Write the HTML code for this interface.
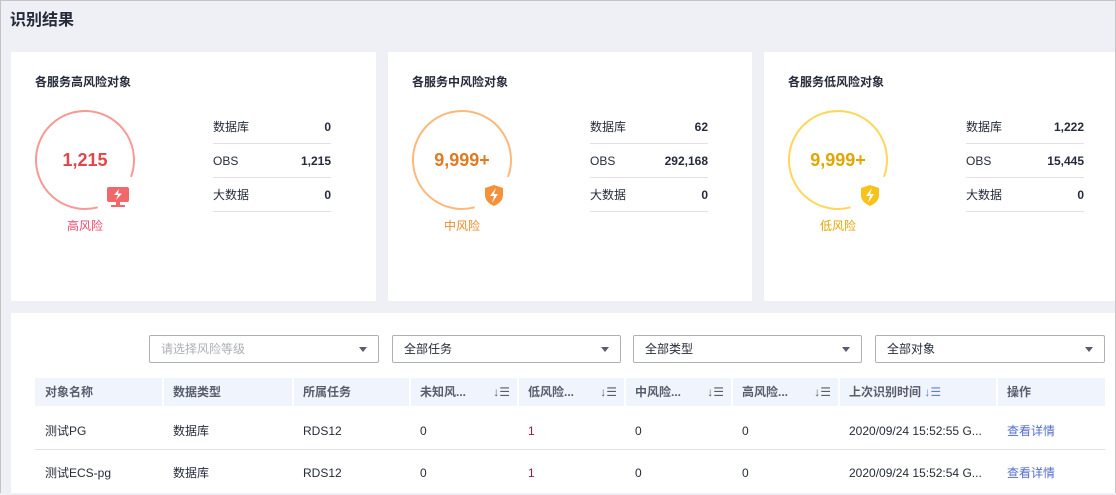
<!DOCTYPE html><html><head><meta charset="utf-8"><style>
*{box-sizing:border-box;margin:0;padding:0}
body{width:1116px;height:493px;overflow:hidden;background:#eef0f5;font-family:"Liberation Sans","Noto Sans CJK SC",sans-serif;font-size:12px;color:#252b3a;position:relative}
.bd{position:absolute;left:0;top:0;width:1116px;height:493px;border:1px solid #c4c4c4;border-bottom:none;pointer-events:none}
.a{position:absolute}
.card{position:absolute;top:52px;height:249px;background:#fff}
.ct{position:absolute;left:24px;top:21px;font-size:12px;font-weight:bold;color:#252b3a}
.st{position:absolute;left:202px;width:118px}
.st div{height:34px;border-bottom:1px solid #dfe1e6;display:flex;justify-content:space-between;align-items:center}
.st b{font-weight:bold}
.num{position:absolute;left:24px;top:96px;width:100px;line-height:24px;text-align:center;font-size:18px;font-weight:bold}
.lbl{position:absolute;left:24px;top:165px;width:100px;text-align:center;font-size:12px}
.dd{position:absolute;top:335px;height:28px;border:1px solid #adb0b8;border-radius:2px;background:#fff;padding-left:11px;line-height:26px;font-size:12px}
.dd:after{content:"";position:absolute;right:11px;top:11px;border:4px solid transparent;border-top:5px solid #575d6c}
.th{position:absolute;top:378px;height:28px;background:#f0f4fc;line-height:28px;font-weight:bold;color:#575d6c;padding-left:10px}
.td{position:absolute;height:44px;line-height:44px;padding-left:10px;color:#252b3a}
.sep{position:absolute;width:2px;background:#fff;top:378px;height:28px}
.srt{position:absolute;right:8px;top:0;font-weight:normal;color:#575d6c}
</style></head><body>
<div class="a" style="left:10px;top:6px;font-size:16px;font-weight:bold">识别结果</div>

<div class="card" style="left:11px;width:365px">
<div class="ct">各服务高风险对象</div>
<svg class="a" style="left:22px;top:56px" width="110" height="110"><path d="M64.7 99.3 A49 49 0 1 1 98 68.8" fill="none" stroke="#f59a95" stroke-width="2"/>
<rect x="74" y="79" width="22" height="15" rx="2" fill="#f0686a"/><rect x="83" y="94" width="4" height="3" fill="#f0686a"/><rect x="78" y="97" width="14" height="2" fill="#f0686a"/><path d="M86 81 L81 87 L85 87 L83 92 L89 85.5 L85 85.5 Z" fill="#fff"/></svg>
<div class="num" style="color:#e0464a">1,215</div>
<div class="lbl" style="color:#e84a6e">高风险</div>
<div class="st" style="top:58px"><div><span>数据库</span><b>0</b></div><div><span>OBS</span><b>1,215</b></div><div><span>大数据</span><b>0</b></div></div>
</div>

<div class="card" style="left:388px;width:364px">
<div class="ct">各服务中风险对象</div>
<svg class="a" style="left:22px;top:56px" width="110" height="110"><path d="M64.7 99.3 A49 49 0 1 1 98 68.8" fill="none" stroke="#fbb97c" stroke-width="2"/>
<path d="M84 77 L93 80 L93 87 Q93 94 84 98 Q75 94 75 87 L75 80 Z" fill="#f5903b"/><path d="M86 80 L80 88 L84 88 L82 95 L88 86 L84 86 Z" fill="#fff"/></svg>
<div class="num" style="color:#e07b24">9,999+</div>
<div class="lbl" style="color:#f08a2a">中风险</div>
<div class="st" style="top:58px"><div><span>数据库</span><b>62</b></div><div><span>OBS</span><b>292,168</b></div><div><span>大数据</span><b>0</b></div></div>
</div>

<div class="card" style="left:764px;width:352px">
<div class="ct">各服务低风险对象</div>
<svg class="a" style="left:22px;top:56px" width="110" height="110"><path d="M64.7 99.3 A49 49 0 1 1 98 68.8" fill="none" stroke="#fcd75a" stroke-width="2"/>
<path d="M84 77 L93 80 L93 87 Q93 94 84 98 Q75 94 75 87 L75 80 Z" fill="#f8c21b"/><path d="M86 80 L80 88 L84 88 L82 95 L88 86 L84 86 Z" fill="#fff"/></svg>
<div class="num" style="color:#e3a500">9,999+</div>
<div class="lbl" style="color:#e3a500">低风险</div>
<div class="st" style="top:58px"><div><span>数据库</span><b>1,222</b></div><div><span>OBS</span><b>15,445</b></div><div><span>大数据</span><b>0</b></div></div>
</div>

<div class="a" style="left:11px;top:313px;width:1105px;height:180px;background:#fff"></div>
<div class="dd" style="left:149px;width:230px;color:#adb0b8">请选择风险等级</div>
<div class="dd" style="left:392px;width:229px">全部任务</div>
<div class="dd" style="left:633px;width:229px">全部类型</div>
<div class="dd" style="left:875px;width:230px">全部对象</div>

<div class="th" style="left:35px;width:128px">对象名称</div>
<div class="th" style="left:163px;width:130px">数据类型</div>
<div class="th" style="left:293px;width:117px">所属任务</div>
<div class="th" style="left:410px;width:108px">未知风...<span class="srt">↓☰</span></div>
<div class="th" style="left:518px;width:107px">低风险...<span class="srt">↓☰</span></div>
<div class="th" style="left:625px;width:107px">中风险...<span class="srt">↓☰</span></div>
<div class="th" style="left:732px;width:107px">高风险...<span class="srt">↓☰</span></div>
<div class="th" style="left:839px;width:158px">上次识别时间 <span style="color:#5e7ce0;font-weight:normal">↓☰</span></div>
<div class="th" style="left:997px;width:108px">操作</div>
<div class="sep" style="left:162px"></div><div class="sep" style="left:292px"></div><div class="sep" style="left:409px"></div><div class="sep" style="left:517px"></div><div class="sep" style="left:624px"></div><div class="sep" style="left:731px"></div><div class="sep" style="left:838px"></div><div class="sep" style="left:996px"></div>
<div class="a" style="left:35px;top:449px;width:1070px;height:1px;background:#dfe1e6"></div>

<div class="td" style="left:35px;top:409px">测试PG</div>
<div class="td" style="left:163px;top:409px">数据库</div>
<div class="td" style="left:293px;top:409px">RDS12</div>
<div class="td" style="left:410px;top:409px">0</div>
<div class="td" style="left:518px;top:409px;color:#9a1b3c">1</div>
<div class="td" style="left:625px;top:409px">0</div>
<div class="td" style="left:732px;top:409px">0</div>
<div class="td" style="left:839px;top:409px">2020/09/24 15:52:55 G...</div>
<div class="td" style="left:997px;top:409px;color:#526ecc">查看详情</div>

<div class="td" style="left:35px;top:451px">测试ECS-pg</div>
<div class="td" style="left:163px;top:451px">数据库</div>
<div class="td" style="left:293px;top:451px">RDS12</div>
<div class="td" style="left:410px;top:451px">0</div>
<div class="td" style="left:518px;top:451px;color:#9a1b3c">1</div>
<div class="td" style="left:625px;top:451px">0</div>
<div class="td" style="left:732px;top:451px">0</div>
<div class="td" style="left:839px;top:451px">2020/09/24 15:52:54 G...</div>
<div class="td" style="left:997px;top:451px;color:#526ecc">查看详情</div>
<div class="bd"></div>
</body></html>
